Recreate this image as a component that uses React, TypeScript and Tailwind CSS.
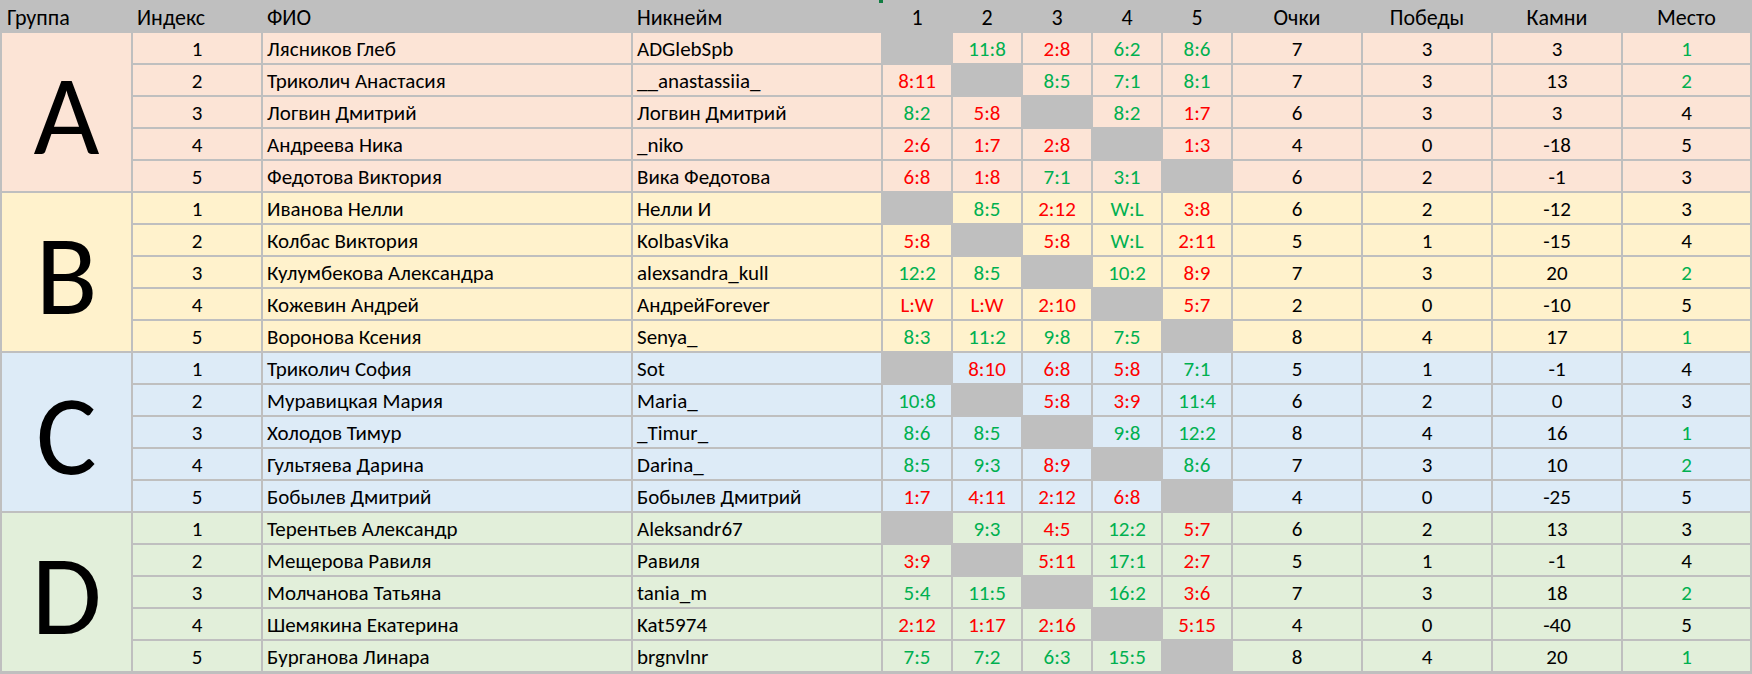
import React from "react";

type Player = {
  idx: number;
  name: string;
  nick: string;
  games: (string | null)[];
  points: number;
  wins: number;
  stones: number;
  place: number;
};

type Group = {
  letter: string;
  bg: string;
  players: Player[];
};

const groups: Group[] = [
  {
    letter: "A",
    bg: "bg-[#fce4d6]",
    players: [
      { idx: 1, name: "Лясников Глеб", nick: "ADGlebSpb", games: [null, "11:8", "2:8", "6:2", "8:6"], points: 7, wins: 3, stones: 3, place: 1 },
      { idx: 2, name: "Триколич Анастасия", nick: "__anastassiia_", games: ["8:11", null, "8:5", "7:1", "8:1"], points: 7, wins: 3, stones: 13, place: 2 },
      { idx: 3, name: "Логвин Дмитрий", nick: "Логвин Дмитрий", games: ["8:2", "5:8", null, "8:2", "1:7"], points: 6, wins: 3, stones: 3, place: 4 },
      { idx: 4, name: "Андреева Ника", nick: "_niko", games: ["2:6", "1:7", "2:8", null, "1:3"], points: 4, wins: 0, stones: -18, place: 5 },
      { idx: 5, name: "Федотова Виктория", nick: "Вика Федотова", games: ["6:8", "1:8", "7:1", "3:1", null], points: 6, wins: 2, stones: -1, place: 3 },
    ],
  },
  {
    letter: "B",
    bg: "bg-[#fff2cc]",
    players: [
      { idx: 1, name: "Иванова Нелли", nick: "Нелли И", games: [null, "8:5", "2:12", "W:L", "3:8"], points: 6, wins: 2, stones: -12, place: 3 },
      { idx: 2, name: "Колбас Виктория", nick: "KolbasVika", games: ["5:8", null, "5:8", "W:L", "2:11"], points: 5, wins: 1, stones: -15, place: 4 },
      { idx: 3, name: "Кулумбекова Александра", nick: "alexsandra_kull", games: ["12:2", "8:5", null, "10:2", "8:9"], points: 7, wins: 3, stones: 20, place: 2 },
      { idx: 4, name: "Кожевин Андрей", nick: "АндрейForever", games: ["L:W", "L:W", "2:10", null, "5:7"], points: 2, wins: 0, stones: -10, place: 5 },
      { idx: 5, name: "Воронова Ксения", nick: "Senya_", games: ["8:3", "11:2", "9:8", "7:5", null], points: 8, wins: 4, stones: 17, place: 1 },
    ],
  },
  {
    letter: "C",
    bg: "bg-[#ddebf7]",
    players: [
      { idx: 1, name: "Триколич София", nick: "Sot", games: [null, "8:10", "6:8", "5:8", "7:1"], points: 5, wins: 1, stones: -1, place: 4 },
      { idx: 2, name: "Муравицкая Мария", nick: "Maria_", games: ["10:8", null, "5:8", "3:9", "11:4"], points: 6, wins: 2, stones: 0, place: 3 },
      { idx: 3, name: "Холодов Тимур", nick: "_Timur_", games: ["8:6", "8:5", null, "9:8", "12:2"], points: 8, wins: 4, stones: 16, place: 1 },
      { idx: 4, name: "Гультяева Дарина", nick: "Darina_", games: ["8:5", "9:3", "8:9", null, "8:6"], points: 7, wins: 3, stones: 10, place: 2 },
      { idx: 5, name: "Бобылев Дмитрий", nick: "Бобылев Дмитрий", games: ["1:7", "4:11", "2:12", "6:8", null], points: 4, wins: 0, stones: -25, place: 5 },
    ],
  },
  {
    letter: "D",
    bg: "bg-[#e2efda]",
    players: [
      { idx: 1, name: "Терентьев Александр", nick: "Aleksandr67", games: [null, "9:3", "4:5", "12:2", "5:7"], points: 6, wins: 2, stones: 13, place: 3 },
      { idx: 2, name: "Мещерова Равиля", nick: "Равиля", games: ["3:9", null, "5:11", "17:1", "2:7"], points: 5, wins: 1, stones: -1, place: 4 },
      { idx: 3, name: "Молчанова Татьяна", nick: "tania_m", games: ["5:4", "11:5", null, "16:2", "3:6"], points: 7, wins: 3, stones: 18, place: 2 },
      { idx: 4, name: "Шемякина Екатерина", nick: "Kat5974", games: ["2:12", "1:17", "2:16", null, "5:15"], points: 4, wins: 0, stones: -40, place: 5 },
      { idx: 5, name: "Бурганова Линара", nick: "brgnvlnr", games: ["7:5", "7:2", "6:3", "15:5", null], points: 8, wins: 4, stones: 20, place: 1 },
    ],
  },
];

const isWin = (score: string) => {
  if (score === "W:L") return true;
  if (score === "L:W") return false;
  const [a, b] = score.split(":").map(Number);
  return a > b;
};

const rowSpans = ["row-span-5 row-start-2", "row-span-5 row-start-7", "row-span-5 row-start-12", "row-span-5 row-start-17"];

export default function App() {
  const cell = "flex items-center pt-[3px] leading-none overflow-hidden whitespace-nowrap";
  const head = "flex items-center pt-[5px] leading-none whitespace-nowrap text-[22px]";

  return (
    <div className="relative w-[1752px] h-[674px] bg-[#bfbfbf] text-black font-['Carlito','Lato',sans-serif] text-[21px]">
      {/* little green selection mark from the sheet */}
      <span className="absolute left-[879px] top-0 w-[4px] h-[3px] bg-[#107c41]" />

      <div className="grid grid-cols-[129px_128px_368px_248px_68px_68px_68px_68px_68px_128px_128px_128px_127px] grid-rows-[31px_repeat(20,30px)] gap-[2px] pl-[2px] pr-[2px] pb-[3px]">
        {/* Header */}
        <div className={`${head} pl-[5px]`}>Группа</div>
        <div className={`${head} pl-[4px]`}>Индекс</div>
        <div className={`${head} pl-[4px]`}>ФИО</div>
        <div className={`${head} pl-[4px]`}>Никнейм</div>
        {["1", "2", "3", "4", "5", "Очки", "Победы", "Камни", "Место"].map((h) => (
          <div key={h} className={`${head} justify-center`}>
            {h}
          </div>
        ))}

        {groups.map((g, gi) => (
          <React.Fragment key={g.letter}>
            <div className={`${rowSpans[gi]} col-start-1 ${g.bg} flex items-center justify-center pt-[6px]`}>
              <span className="text-[114px] leading-none">{g.letter}</span>
            </div>
            {g.players.map((p) => (
              <React.Fragment key={p.idx}>
                <div className={`${cell} ${g.bg} justify-center`}>{p.idx}</div>
                <div className={`${cell} ${g.bg} pl-[4px]`}>{p.name}</div>
                <div className={`${cell} ${g.bg} pl-[4px]`}>{p.nick}</div>
                {p.games.map((s, si) =>
                  s === null ? (
                    <div key={si} className="bg-[#bfbfbf]" />
                  ) : (
                    <div
                      key={si}
                      className={`${cell} ${g.bg} justify-center ${isWin(s) ? "text-[#00b050]" : "text-[#ff0000]"}`}
                    >
                      {s}
                    </div>
                  )
                )}
                <div className={`${cell} ${g.bg} justify-center`}>{p.points}</div>
                <div className={`${cell} ${g.bg} justify-center`}>{p.wins}</div>
                <div className={`${cell} ${g.bg} justify-center`}>{p.stones}</div>
                <div className={`${cell} ${g.bg} justify-center ${p.place <= 2 ? "text-[#00b050]" : ""}`}>
                  {p.place}
                </div>
              </React.Fragment>
            ))}
          </React.Fragment>
        ))}
      </div>
    </div>
  );
}
